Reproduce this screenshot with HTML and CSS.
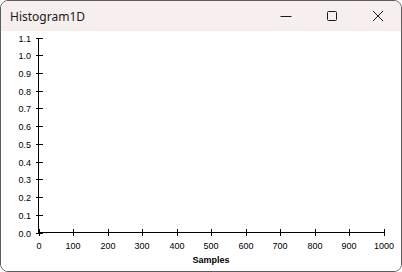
FILE: index.html
```html
<!DOCTYPE html>
<html lang="en">
<head>
  <meta charset="UTF-8">
  <title>Histogram1D</title>
  <link rel="stylesheet" href="styles.css">
</head>
<body>
  <div class="window">
    <!-- Title bar -->
    <div class="titlebar">
      <span class="title">Histogram1D</span>
      <div class="controls">
        <div class="ctrl">
          <svg width="12" height="12" viewBox="0 0 12 12"><path d="M0.5 6.5h11" stroke="#1a1a1a" stroke-width="1"/></svg>
        </div>
        <div class="ctrl">
          <svg width="12" height="12" viewBox="0 0 12 12"><rect x="1.5" y="1.5" width="9" height="9" rx="1" fill="none" stroke="#1a1a1a" stroke-width="1"/></svg>
        </div>
        <div class="ctrl">
          <svg width="12" height="12" viewBox="0 0 12 12"><path d="M1 1L11 11M11 1L1 11" stroke="#1a1a1a" stroke-width="1"/></svg>
        </div>
      </div>
    </div>

    <!-- Plot area -->
    <div class="plot">
      <svg id="chart" width="400" height="240" viewBox="1 31 400 240"></svg>
    </div>
  </div>

  <script>
    const NS = 'http://www.w3.org/2000/svg';
    const chart = document.getElementById('chart');

    const x0 = 38.5, x1 = 383.5;
    const y0 = 232.5, y1 = 37.5;

    const add = (tag, attrs, text) => {
      const el = document.createElementNS(NS, tag);
      for (const k in attrs) el.setAttribute(k, attrs[k]);
      if (text !== undefined) el.textContent = text;
      chart.appendChild(el);
      return el;
    };

    // axes
    add('line', { x1: x0, y1: y1, x2: x0, y2: y0, class: 'axis' });
    add('line', { x1: x0, y1: y0, x2: x1, y2: y0, class: 'axis' });

    // y ticks 0.0 .. 1.1
    for (let i = 0; i <= 11; i++) {
      const y = Math.round(y0 - i * (y0 - y1) / 11) + 0.5;
      add('line', { x1: x0 - 3, y1: y - 0.5, x2: x0 + 4, y2: y - 0.5, class: 'axis' });
      add('text', { x: 31, y: y + 3, class: 'ylabel' }, (i / 10).toFixed(1));
    }

    // x ticks 0 .. 1000
    for (let i = 0; i <= 10; i++) {
      const x = Math.round(x0 + i * (x1 - x0) / 10) - 0.5;
      add('line', { x1: x + 0.5, y1: y0 - 3.5, x2: x + 0.5, y2: y0 + 3.5, class: 'axis' });
      add('text', { x: x + 0.5, y: 249, class: 'xlabel' }, String(i * 100));
    }

    add('text', { x: 211, y: 263, class: 'axis-title' }, 'Samples');
  </script>
</body>
</html>
```

FILE: styles.css
```css
body {
  margin: 0;
  padding: 0;
  background-color: #ffffff;
  font-family: "Noto Sans", "Open Sans", sans-serif;
}
.window {
  width: 402px;
  height: 272px;
  box-sizing: border-box;
  border: 1px solid #5c5c5c;
  border-radius: 8px;
  overflow: hidden;
  background-color: #fff;
  display: flex;
  flex-direction: column;
}
.titlebar {
  height: 30px;
  flex: none;
  display: flex;
  align-items: center;
  background-color: #f6efee;
}
.title {
  padding-left: 9px;
  font-size: 12px;
  color: #1a1a1a;
  flex: 1;
}
.controls {
  display: flex;
  height: 100%;
}
.ctrl {
  width: 46px;
  display: flex;
  align-items: center;
  justify-content: center;
}
.plot {
  flex: 1;
  background-color: #fff;
}
#chart {
  display: block;
}
.axis {
  stroke: #000;
  stroke-width: 1;
  shape-rendering: crispEdges;
}
.ylabel,
.xlabel {
  font-family: "Liberation Sans", Arial, sans-serif;
  font-size: 9px;
  fill: #000;
}
.ylabel {
  text-anchor: end;
}
.xlabel {
  text-anchor: middle;
}
.axis-title {
  font-family: "Liberation Sans", Arial, sans-serif;
  font-size: 9px;
  font-weight: bold;
  text-anchor: middle;
  fill: #000;
}
```
